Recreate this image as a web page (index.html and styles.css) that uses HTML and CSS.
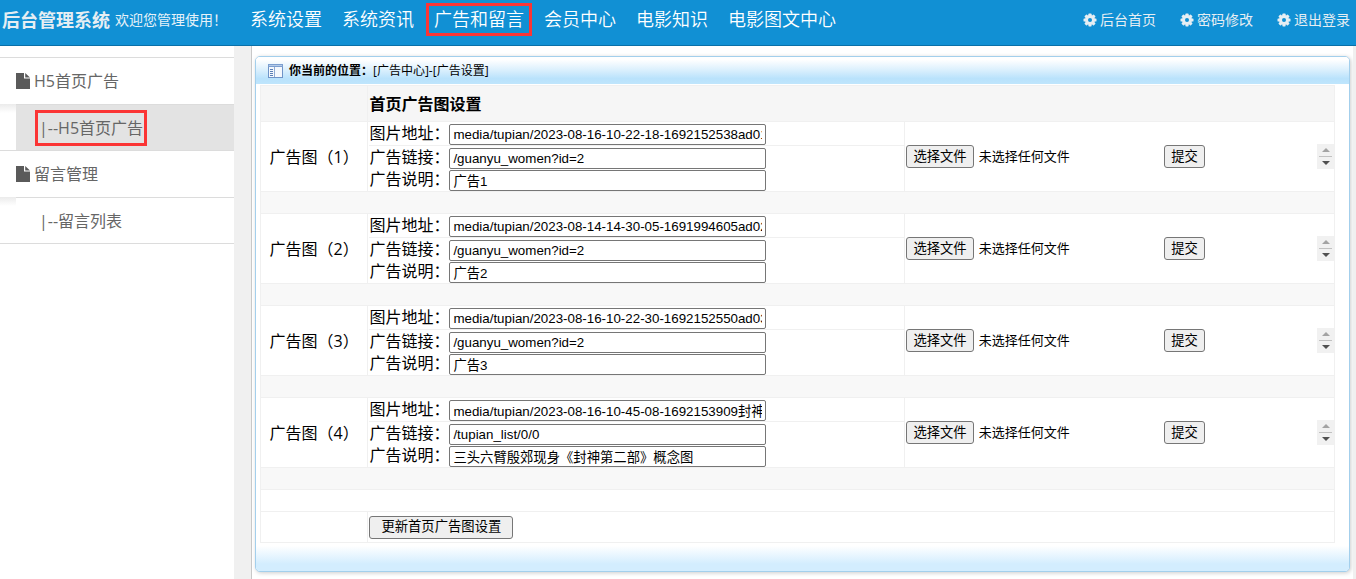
FILE: index.html
```html
<!DOCTYPE html>
<html lang="zh-CN">
<head>
<meta charset="utf-8">
<title>后台管理系统</title>
<link rel="stylesheet" href="styles.css">
</head>
<body>
<svg class="defs" aria-hidden="true">
  <symbol id="gear" viewBox="0 0 14 14">
    <g fill="currentColor">
      <rect x="5.4" y="0.5" width="3.2" height="13" rx=".7"/>
      <rect x="5.4" y="0.5" width="3.2" height="13" rx=".7" transform="rotate(45 7 7)"/>
      <rect x="5.4" y="0.5" width="3.2" height="13" rx=".7" transform="rotate(90 7 7)"/>
      <rect x="5.4" y="0.5" width="3.2" height="13" rx=".7" transform="rotate(135 7 7)"/>
      <circle cx="7" cy="7" r="4.9"/>
    </g>
    <circle cx="7" cy="7" r="2" fill="#1190d4"/>
  </symbol>
  <symbol id="file" viewBox="0 0 14 16">
    <path d="M0 0H8V5.5H14V16H0ZM9.2 0L14 4.5H9.2Z" fill="currentColor"/>
  </symbol>
</svg>
<header class="topbar">
  <h1 class="brand">后台管理系统</h1>
  <span class="welcome">欢迎您管理使用！</span>
  <nav class="mainnav">
    <a href="#">系统设置</a>
    <a href="#">系统资讯</a>
    <a href="#" class="marked">广告和留言</a>
    <a href="#">会员中心</a>
    <a href="#">电影知识</a>
    <a href="#">电影图文中心</a>
  </nav>
  <nav class="tools">
    <a href="#"><svg><use href="#gear"/></svg>后台首页</a>
    <a href="#"><svg><use href="#gear"/></svg>密码修改</a>
    <a href="#"><svg><use href="#gear"/></svg>退出登录</a>
  </nav>
</header>
<div class="layout">
  <nav class="sidebar">
    <a class="group" href="#"><svg><use href="#file"/></svg>H5首页广告</a>
    <div class="sub"><a class="active" href="#"><span class="marked">|--H5首页广告</span></a></div>
    <a class="group" href="#"><svg><use href="#file"/></svg>留言管理</a>
    <div class="sub"><a href="#"><span>|--留言列表</span></a></div>
  </nav>
  <div class="gutter"></div>
  <main class="content">
    <section class="panel">
      <div class="panel-head">
        <svg class="panel-icon" viewBox="0 0 15 14">
          <rect x=".5" y=".5" width="14" height="13" fill="#f4f8fd" stroke="#6f94c8"/>
          <rect x="0" y="0" width="15" height="3" fill="#7c9fd0"/>
          <rect x="1" y="1" width="13" height="1" fill="#b5cbe8"/>
          <path d="M2 5.5H5M2 7.5H5M2 9.5H5M2 11.5H5" stroke="#5b7fb5"/>
          <path d="M6.5 3V13" stroke="#8fabd3"/>
        </svg>
        <strong>你当前的位置：</strong><span>[广告中心]-[广告设置]</span>
      </div>
      <form class="panel-body">
        <table class="ads">
          <colgroup><col class="c-name"><col class="c-fields"><col class="c-file"><col></colgroup>
          <tr class="title"><td></td><th colspan="3">首页广告图设置</th></tr>
          <tr>
            <td class="name">广告图（1）</td>
            <td class="fields">
              <label class="field">图片地址：<input type="text" value="media/tupian/2023-08-16-10-22-18-1692152538ad01.jpg"></label>
              <label class="field">广告链接：<input type="text" value="/guanyu_women?id=2"></label>
              <label class="field">广告说明：<input type="text" value="广告1"></label>
            </td>
            <td class="file"><button type="button">选择文件</button><span>未选择任何文件</span></td>
            <td><div class="send"><button type="submit">提交</button><div class="scroller"><button type="button" class="up" aria-label="向上"></button><button type="button" class="down" aria-label="向下"></button></div></div></td>
          </tr>
          <tr class="gap"><td colspan="4"></td></tr>
          <tr>
            <td class="name">广告图（2）</td>
            <td class="fields">
              <label class="field">图片地址：<input type="text" value="media/tupian/2023-08-14-14-30-05-1691994605ad02.jpg"></label>
              <label class="field">广告链接：<input type="text" value="/guanyu_women?id=2"></label>
              <label class="field">广告说明：<input type="text" value="广告2"></label>
            </td>
            <td class="file"><button type="button">选择文件</button><span>未选择任何文件</span></td>
            <td><div class="send"><button type="submit">提交</button><div class="scroller"><button type="button" class="up" aria-label="向上"></button><button type="button" class="down" aria-label="向下"></button></div></div></td>
          </tr>
          <tr class="gap"><td colspan="4"></td></tr>
          <tr>
            <td class="name">广告图（3）</td>
            <td class="fields">
              <label class="field">图片地址：<input type="text" value="media/tupian/2023-08-16-10-22-30-1692152550ad03.jpg"></label>
              <label class="field">广告链接：<input type="text" value="/guanyu_women?id=2"></label>
              <label class="field">广告说明：<input type="text" value="广告3"></label>
            </td>
            <td class="file"><button type="button">选择文件</button><span>未选择任何文件</span></td>
            <td><div class="send"><button type="submit">提交</button><div class="scroller"><button type="button" class="up" aria-label="向上"></button><button type="button" class="down" aria-label="向下"></button></div></div></td>
          </tr>
          <tr class="gap"><td colspan="4"></td></tr>
          <tr>
            <td class="name">广告图（4）</td>
            <td class="fields">
              <label class="field">图片地址：<input type="text" value="media/tupian/2023-08-16-10-45-08-1692153909封神"></label>
              <label class="field">广告链接：<input type="text" value="/tupian_list/0/0"></label>
              <label class="field">广告说明：<input type="text" value="三头六臂殷郊现身《封神第二部》概念图"></label>
            </td>
            <td class="file"><button type="button">选择文件</button><span>未选择任何文件</span></td>
            <td><div class="send"><button type="submit">提交</button><div class="scroller"><button type="button" class="up" aria-label="向上"></button><button type="button" class="down" aria-label="向下"></button></div></div></td>
          </tr>
          <tr class="gap"><td colspan="4"></td></tr>
          <tr class="blank"><td colspan="4"></td></tr>
          <tr class="update"><td></td><td colspan="3"><button type="submit">更新首页广告图设置</button></td></tr>
        </table>
      </form>
      <div class="panel-foot"></div>
    </section>
  </main>
  <div class="edge"></div>
</div>
</body>
</html>
```
FILE: styles.css
```css
* { box-sizing: border-box; }
html, body { height: 100%; }
body {
  margin: 0;
  display: flex;
  flex-direction: column;
  overflow: hidden;
  background: #fff;
  color: #000;
  font: 16px/20px "Open Sans", "Noto Sans CJK SC", sans-serif;
}
a { color: inherit; text-decoration: none; white-space: nowrap; }
.defs { position: absolute; width: 0; height: 0; }

.topbar {
  display: flex;
  align-items: center;
  flex: none;
  height: 46px;
  padding: 0 6px 6px 2px;
  background: #1190d4;
  border-bottom: 1px solid #0a70a8;
  color: #fff;
}
.brand { margin: 0 5px 0 0; font-size: 18px; font-weight: 700; color: #e6eef3; white-space: nowrap; }
.welcome { width: 127px; font-size: 14px; color: #e6f2f9; white-space: nowrap; }
.mainnav { display: flex; align-items: center; gap: 4px; font-size: 18px; font-weight: 350; }
.mainnav a { padding: 1px 5px; border: 3px solid transparent; line-height: 25px; }
.mainnav .marked { border-color: #fb3535; }
.tools { display: flex; gap: 24px; margin-left: auto; font-size: 14px; color: #e6eef3; }
.tools a { display: flex; align-items: center; gap: 3px; }
.tools svg { width: 14px; height: 14px; }

.layout { display: flex; flex: 1; min-height: 0; }
.sidebar { width: 234px; flex: none; margin-top: 11px; color: #666; }
.group {
  display: flex;
  align-items: center;
  gap: 4px;
  height: 47px;
  padding-left: 16px;
  border-top: 1px solid #dcdcdc;
}
.group svg { width: 14px; height: 16px; color: #5a5a5a; }
.sub { padding-left: 16px; background: linear-gradient(#ebebeb, #fff 9px); }
.sub a {
  display: flex;
  align-items: center;
  height: 46px;
  padding-left: 19px;
  border-top: 1px solid #dcdcdc;
  background: #fff;
}
.sub .active { background: #e3e3e3; }
.sub span { padding: 5px 1px; border: 3px solid transparent; }
.sub span.marked { border-color: #fb3535; }
.sub:last-child { border-bottom: 1px solid #dcdcdc; }
.gutter { width: 18px; flex: none; background: #f0f0f0; border-right: 1px solid #c8c8c8; }
.edge { width: 3px; flex: none; background: #f0f0f0; }

.content { flex: 1; min-width: 0; padding: 10px 3px 7px; }
.panel {
  display: flex;
  flex-direction: column;
  height: 100%;
  border: 1px solid #a3cfec;
  border-radius: 5px;
  overflow: hidden;
  background: #fff;
  box-shadow: 1px 1px 4px #ccc;
}
.panel-head {
  display: flex;
  align-items: center;
  flex: none;
  height: 27px;
  padding-left: 12px;
  background: linear-gradient(#fff 10%, #d9effd 50%, #b9e2fc 80%, #bfe5fc);
  font-size: 12px;
}
.panel-icon { width: 15px; height: 14px; margin-right: 6px; }
.panel-body { flex: none; padding: 1px 14px 0 4px; }
.panel-foot { flex: 1; background: linear-gradient(#fff 10%, #d3edfe 75%, #d3edfe); }

.ads {
  width: 100%;
  table-layout: fixed;
  border-collapse: separate;
  border-spacing: 0;
  border: solid #f0f0f0;
  border-width: 1px 0 0 1px;
}
.c-name { width: 10%; }
.c-fields { width: 50%; }
.c-file { width: 24%; }
.ads td, .ads th { padding: 0 0 0 1px; border: solid #f0f0f0; border-width: 0 1px 1px 0; text-align: left; }
.ads td.file { border-right: 0; }
.title { height: 36px; background: #f6f6f6; }
.title th { font-weight: 700; }
.gap { height: 22px; background: #f8f8f8; }
.blank { height: 22px; }
.update { height: 31px; }
.ads .name { padding: 0; text-align: center; }
.field {
  display: flex;
  align-items: flex-end;
  height: 22px;
  line-height: 24px;
  white-space: nowrap;
}
.field:first-child { height: 24px; border-bottom: 1px solid #f0f0f0; }
.field:nth-child(2) { height: 23px; }
.field input {
  width: 317px;
  height: 21px;
  padding: 1px 3px;
  border: 1px solid #767676;
  border-radius: 2px;
  background: #fff;
  font-family: "Liberation Sans", "Noto Sans CJK SC", sans-serif;
}
.file span { margin-left: 5px; font-size: 13px; }
.ads td > button, .send > button {
  height: 23px;
  padding: 0 6px;
  border: 1px solid #767676;
  border-radius: 3px;
  background: #efefef;
  color: #000;
  font-family: "Liberation Sans", "Noto Sans CJK SC", sans-serif;
  line-height: 20px;
  vertical-align: middle;
}
.ads .update td > button { padding: 0 11px; }
.send { display: flex; align-items: center; justify-content: space-between; }
.scroller { display: flex; flex-direction: column; width: 17px; height: 25px; padding: 0 2px; background: #f1f1f1; }
.scroller button { flex: 1; padding: 0; border: 0; background: none; display: grid; place-items: center; }
.scroller .up { border-bottom: 1px solid #c1c1c1; }
.scroller button::before { content: ""; border: 4px solid transparent; }
.scroller .up::before { border-top: 0; border-bottom-color: #a3a3a3; }
.scroller .down::before { border-bottom: 0; border-top-color: #505050; }
```
